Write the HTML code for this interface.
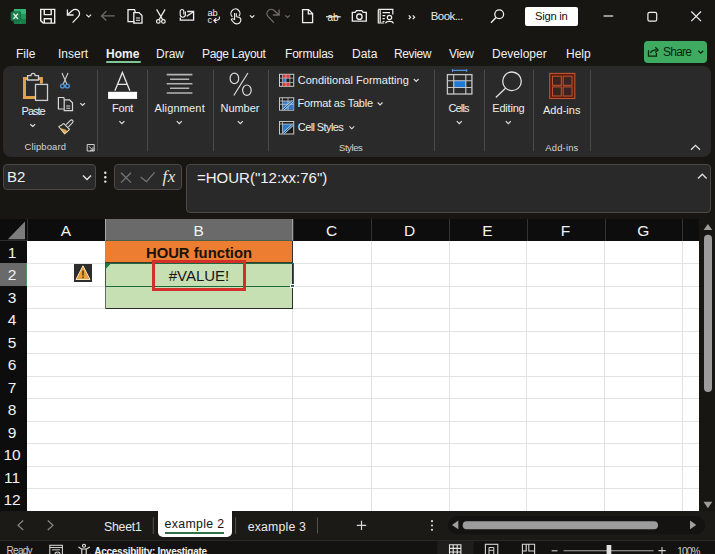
<!DOCTYPE html>
<html><head><meta charset="utf-8">
<style>
*{margin:0;padding:0;box-sizing:border-box}
html,body{width:715px;height:554px;overflow:hidden;background:#181613;font-family:"Liberation Sans",sans-serif;color:#e6e6e6}
.a{position:absolute}
.t{position:absolute;white-space:nowrap;line-height:1}
svg{position:absolute;overflow:visible}
/* menu */
.menu{font-size:12px;color:#f0f0f0;top:48px}
/* ribbon */
#ribbon{left:3px;top:66px;width:708px;height:91px;background:#2a2a2a;border-radius:8px}
.sep{position:absolute;width:1px;background:#4a4a4a;top:70px;height:81px}
.rl{font-size:12px;color:#e6e6e6}
.glab{font-size:11px;color:#dcdcdc}
/* formula */
.box{position:absolute;background:#292929;border:1px solid #4a4948;border-radius:4px}
/* grid */
#grid{left:0;top:219px;width:699px;height:292px;background:#fff;overflow:hidden}
.ch{position:absolute;top:0;height:22px;background:#0d0d0d;color:#f0f0f0;font-size:15px;text-align:center;line-height:22px}
.rh{position:absolute;left:0;width:27px;background:#0d0d0d;color:#f0f0f0;font-size:15px;text-align:center;padding-right:4px}
.gl{position:absolute;background:#e3e3e3}
</style></head><body>

<!-- title bar -->
<svg style="left:0;top:0" width="715" height="35" fill="none" stroke="#f0f0f0" stroke-width="1.2">
<!-- excel logo -->
<rect x="13.8" y="8.9" width="12.2" height="14.8" rx="1.2" fill="#1f9a5c" stroke="none"/>
<rect x="13.8" y="8.9" width="12.2" height="5" rx="1" fill="#33b577" stroke="none"/>
<rect x="13.8" y="18.7" width="12.2" height="5" rx="1" fill="#17804a" stroke="none"/>
<path d="M20.5 8.9 V23.7" stroke="#2a9f63" stroke-width="0.6"/>
<rect x="10.9" y="11.8" width="9.7" height="9" rx="1" fill="#1b8450" stroke="#0f5a33" stroke-width="0.6"/>
<path d="M13.5 13.7 L17.9 18.9 M17.9 13.7 L13.5 18.9" stroke="#f4f4f4" stroke-width="1.3"/>
<!-- save -->
<path d="M40.7 9.4 H54.7 V23.1 H43.2 L40.7 20.6 Z" stroke-width="1.4"/>
<path d="M44.3 9.4 V14.6 H51.2 V9.4" stroke-width="1.4"/>
<path d="M44.3 23.1 V18.8 H51.2 V23.1" stroke-width="1.4"/>
<!-- undo -->
<path d="M67.6 14.8 L72.3 10.6 A4.2 4.2 0 1 1 78.3 16.6 L72.6 22.6" stroke-width="1.3"/>
<path d="M67.4 9.4 V15 H73.6" stroke-width="1.3"/>
<path d="M86.3 14.7 L88.7 17 L91.1 14.7" stroke-width="1.1"/>
<!-- back arrow gray -->
<path d="M101.5 15.9 H114.8 M106.3 11.3 L101.5 15.9 L106.3 20.5" stroke="#6e6c6a" stroke-width="1.3"/>
<!-- copy -->
<path d="M134.5 21.6 H128 V9.6 H134.5 L135.3 12" stroke-width="1.3"/>
<path d="M133.8 12.6 H139 L142 15.6 V23.2 H133.8 Z" stroke-width="1.3"/>
<path d="M136 18 H140 M136 20.3 H140" stroke-width="1.1"/>
<!-- scissors -->
<path d="M156.6 9.4 L162.6 19.6 M165.1 9.4 L159.1 19.6" stroke-width="1.2"/>
<circle cx="158.3" cy="21.4" r="1.8" stroke-width="1.2"/>
<circle cx="163.4" cy="21.4" r="1.8" stroke-width="1.2"/>
<!-- mail attach -->
<path d="M180.3 17.4 V20.2 H193.6 V11.5 H187.2" stroke-width="1.3"/>
<path d="M186.7 16.3 L193.1 11.9" stroke-width="1.2"/>
<path d="M185.4 11.4 V14.6 A2.6 2.6 0 0 1 180.2 14.6 V11.3 A1.8 1.8 0 0 1 183.8 11.3 V14.4" stroke-width="1.1"/>
<!-- proofing -->
<text x="207.6" y="15.7" font-family="Liberation Sans" font-size="9.2" fill="#f0f0f0" stroke="none" letter-spacing="-0.3">ab</text>
<text x="207.6" y="22.9" font-family="Liberation Sans" font-size="9.2" fill="#f0f0f0" stroke="none">c</text>
<path d="M219 16.6 C220.5 18.5 219 20.6 214 20.6 M216.3 18.2 L213.8 20.6 L216.3 23" stroke-width="1.1"/>
<!-- touch -->
<path d="M232.4 16.8 A4.5 4.5 0 1 1 239 16.2" stroke-width="1.2"/>
<path d="M234.6 13 V19.5 L232.5 18.8 C231.3 18.5 230.9 19.5 231.8 20.4 L234.5 23.3 C236.5 24.3 239.5 24 240.5 21.5 C241.2 19.5 240.8 18 239.5 17.5 L236.6 16.8" stroke-width="1.1"/>
<path d="M236.3 13.2 V17" stroke-width="1.1"/>
<path d="M249.9 15.3 L252.1 17.5 L254.3 15.3" stroke-width="1.1"/>
<!-- redo gray -->
<path d="M279.1 9.4 V15 H272.9" stroke="#6e6c6a" stroke-width="1.3"/>
<path d="M278.9 14.8 L274.2 10.6 A4.2 4.2 0 1 0 268.2 16.6 L273.9 22.6" stroke="#6e6c6a" stroke-width="1.3"/>
<path d="M285.3 15.3 L287.5 17.5 L289.7 15.3" stroke="#6e6c6a" stroke-width="1.1"/>
<!-- new doc -->
<path d="M302.6 9.6 H308.6 L312.6 13.6 V22.6 H302.6 Z M308.3 9.8 V13.9 H312.4" stroke-width="1.3"/>
<!-- strike ab -->
<text x="327.5" y="21" font-family="Liberation Sans" font-size="10" fill="#f0f0f0" stroke="none">ab</text>
<path d="M326 16.8 H340.8" stroke-width="1.2"/>
<!-- camera -->
<path d="M352.3 12.3 H355.2 L356.5 10.6 H361.8 L363.2 12.3 H366.3 V21.2 H352.3 Z" stroke-width="1.3"/>
<circle cx="359.4" cy="16.7" r="2.7" stroke-width="1.3"/>
<!-- reader -->
<path d="M378.3 9.4 H392.8 V14.5 M378.3 9.4 V23 H384.2" stroke-width="1.2"/>
<path d="M380.2 9.4 V23" stroke-width="1.6" stroke="#bdbdbd"/>
<path d="M382.5 12.6 H390 M382.5 15.6 H385.3 M382.5 18.6 H384.8 M382.5 21.5 H384.5" stroke-width="1.1"/>
<circle cx="389.5" cy="17.5" r="2.2" stroke-width="1.2"/>
<path d="M385.6 23.4 C386 20.8 393 20.8 393.4 23.4" stroke-width="1.2"/>
<!-- chevrons -->
<path d="M408.8 15.3 L410.6 17.2 L408.8 19.1 M412.8 15.3 L414.6 17.2 L412.8 19.1" stroke-width="1.2"/>
<!-- search -->
<circle cx="499.2" cy="14.2" r="4.4" stroke-width="1.3"/>
<path d="M496 17.5 L491 22.8" stroke-width="1.4"/>
<!-- window controls -->
<path d="M603.6 16 H613.2" stroke-width="1.2"/>
<rect x="647.9" y="12.3" width="8.8" height="8.8" rx="1.6" stroke-width="1.2"/>
<path d="M691.3 11.5 L701 21.2 M701 11.5 L691.3 21.2" stroke-width="1.2"/>
</svg>

<div class="t" style="left:430.7px;top:11.1px;font-size:11.5px;letter-spacing:-0.55px;color:#e8e8e8">Book...</div>
<div class="a" style="left:525px;top:7px;width:52.7px;height:18.8px;background:#fff;border-radius:2px"></div>
<div class="t" style="left:535px;top:11.2px;font-size:11.2px;letter-spacing:-0.25px;color:#111">Sign in</div>

<!-- menu -->
<div class="t menu" style="left:16px">File</div>
<div class="t menu" style="left:58px">Insert</div>
<div class="t menu" style="left:106px;font-weight:bold">Home</div>
<div class="a" style="left:106px;top:60.8px;width:34.6px;height:2.2px;background:#7cc794;border-radius:1px"></div>
<div class="t menu" style="left:156px">Draw</div>
<div class="t menu" style="left:202px;letter-spacing:-0.35px">Page Layout</div>
<div class="t menu" style="left:285px;letter-spacing:-0.2px">Formulas</div>
<div class="t menu" style="left:352px">Data</div>
<div class="t menu" style="left:394px;letter-spacing:-0.4px">Review</div>
<div class="t menu" style="left:449px;letter-spacing:-0.3px">View</div>
<div class="t menu" style="left:492px">Developer</div>
<div class="t menu" style="left:566px">Help</div>
<div class="a" style="left:644px;top:41px;width:63px;height:22px;background:#3fab60;border-radius:4px"></div>
<div class="t" style="left:663.1px;top:46px;font-size:12px;letter-spacing:-0.81px;color:#08260f">Share</div>
<svg style="left:0;top:0" width="715" height="70" fill="none" stroke="#08260f" stroke-width="1.3">
<path d="M648.5 50.3 V56.2 H656.4 V53"/>
<path d="M650.6 53.2 C651.2 51 653 49.9 656.5 49.9"/>
<path d="M655.3 47.3 L658 49.9 L655.3 52.5"/>
<path d="M698.3 50.8 L700.8 53.2 L703.3 50.8" stroke-width="1.2"/>
</svg>

<!-- ribbon -->
<div id="ribbon" class="a"></div>
<div class="sep" style="left:97px"></div>
<div class="sep" style="left:147px"></div>
<div class="sep" style="left:213px"></div>
<div class="sep" style="left:268px"></div>
<div class="sep" style="left:434px"></div>
<div class="sep" style="left:484px"></div>
<div class="sep" style="left:533px"></div>
<div class="sep" style="left:590px"></div>

<svg style="left:0;top:0" width="715" height="160" fill="none" stroke="#d8d8d8" stroke-width="1.2">
<!-- paste -->
<path d="M27.5 78.5 H24.5 V97.6 H35" stroke="#e0a24a" stroke-width="3"/>
<path d="M38.5 78.5 H41.4 V83.5" stroke="#e0a24a" stroke-width="3"/>
<path d="M27.6 80 V75.6 H31 C31 72.6 35.2 72.6 35.2 75.6 H38.5 V80 Z" stroke="#cfcfcf" stroke-width="1.3" fill="#2a2a2a"/>
<rect x="35.5" y="84.4" width="12" height="16" stroke="#cfcfcf" stroke-width="1.3" fill="#2a2a2a"/>
<path d="M30.3 124.2 L32.7 126.5 L35.1 124.2" stroke-width="1.2" stroke="#e0e0e0"/>
<!-- scissors -->
<path d="M62 73 L67 84.5 M68 73 L63 84.5" stroke="#d0d0d0" stroke-width="1.1"/>
<circle cx="62.5" cy="86" r="1.9" stroke="#4d95db" stroke-width="1.4"/>
<circle cx="67.4" cy="86" r="1.9" stroke="#4d95db" stroke-width="1.4"/>
<!-- copy -->
<path d="M63.6 109 H58.4 V97.5 H63.8 L64.3 99.5" stroke-width="1.2"/>
<path d="M64.2 99.8 H69.5 L72.5 102.8 V110.6 H64.2 Z" stroke-width="1.2"/>
<path d="M66.2 106 H70.2 M66.2 108.3 H70.2" stroke-width="1.1"/>
<path d="M80.3 103.2 L82.6 105.5 L84.9 103.2" stroke-width="1.2" stroke="#e0e0e0"/>
<!-- brush -->
<path d="M66.2 124.6 L70.4 120.4 C71 119.8 72 119.8 72.6 120.4 C73.2 121 73.2 122 72.6 122.6 L68.4 126.8" stroke="#dcdcdc" stroke-width="1.1"/>
<path d="M63.6 123.3 L69.6 129.3" stroke="#dcdcdc" stroke-width="1.2"/>
<path d="M60 128 L65.6 129.6 L67.2 131.2 L64.7 133.7 Z" fill="#e2a447" stroke="none"/>
<path d="M58.6 126.5 C60.5 126 62 125 63.6 123.3 M69.6 129.3 C67.8 131 66.8 132.2 64.6 133.8 L58.6 126.5" stroke="#e8dcc0" stroke-width="1.1"/>
<!-- font -->
<path d="M114.9 90.8 L122.4 72.4 L129.9 90.8 M118 84.3 H126.8" stroke="#e8e8e8" stroke-width="1.3"/>
<rect x="108.1" y="91.8" width="29" height="7.1" fill="#ffffff" stroke="none"/>
<path d="M119.4 121.2 L121.9 123.7 L124.4 121.2" stroke-width="1.2" stroke="#e0e0e0"/>
<!-- alignment -->
<path d="M166.7 74.6 H192.4 M170 79.3 H189.2 M166.7 83.8 H192.4 M170 88.3 H189.2 M166.7 93 H192.4" stroke="#b4b4b4" stroke-width="1.6"/>
<path d="M176.8 121.2 L179.3 123.7 L181.8 121.2" stroke-width="1.2" stroke="#e0e0e0"/>
<!-- number -->
<path d="M247.9 73 L233.8 95.5" stroke="#dcdcdc" stroke-width="1.2"/>
<ellipse cx="234.4" cy="78.4" rx="4.3" ry="5.2" stroke="#dcdcdc" stroke-width="1.2"/>
<ellipse cx="246.9" cy="90.2" rx="4.3" ry="5.2" stroke="#dcdcdc" stroke-width="1.2"/>
<path d="M237.8 121.2 L240.3 123.7 L242.8 121.2" stroke-width="1.2" stroke="#e0e0e0"/>
<!-- conditional formatting -->
<rect x="279.5" y="74.3" width="14.2" height="12" fill="#1a1a1a" stroke="#d0d0d0" stroke-width="1"/>
<rect x="282.5" y="74.8" width="7.3" height="3.4" fill="#e03a3a" stroke="none"/>
<rect x="282.5" y="82.6" width="7.3" height="3.5" fill="#e03a3a" stroke="none"/>
<rect x="282.5" y="78.3" width="3.5" height="4.2" fill="#3d6fc7" stroke="none"/>
<path d="M282.4 74.3 V86.3 M286 74.3 V86.3 M289.9 74.3 V86.3 M279.5 78.2 H293.7 M279.5 82.5 H293.7" stroke="#bdbdbd" stroke-width="0.8"/>
<path d="M413.8 79 L416.2 81.4 L418.6 79" stroke-width="1.1" stroke="#e0e0e0"/>
<!-- format as table -->
<rect x="279.5" y="97.8" width="14.2" height="12.4" fill="#1a1a1a" stroke="#c8c8c8" stroke-width="1"/>
<path d="M282.6 101 H293.5 V109.8 H282.6 Z" fill="#2f78c4" stroke="none"/>
<path d="M282.4 97.8 V110.2 M288 97.8 V110.2 M279.5 101 H293.7 M279.5 104.3 H293.7" stroke="#c8c8c8" stroke-width="0.8"/>
<path d="M283.6 109.3 L293 100.8" stroke="#9fd0f5" stroke-width="2.4"/>
<path d="M283.6 109.3 L293 100.8" stroke="#1d3550" stroke-width="0.9"/>
<path d="M377.7 102.5 L380.1 104.9 L382.5 102.5" stroke-width="1.1" stroke="#e0e0e0"/>
<!-- cell styles -->
<rect x="279.5" y="121.5" width="14.2" height="12.5" fill="#1a1a1a" stroke="#c8c8c8" stroke-width="1"/>
<path d="M282.4 124 H292.5 L282.4 133.5 Z" fill="#2f78c4" stroke="none"/>
<path d="M282.4 121.5 V134 M279.5 124 H293.7" stroke="#c8c8c8" stroke-width="0.8"/>
<path d="M283.6 133.2 L293 124.6" stroke="#9fd0f5" stroke-width="2.4"/>
<path d="M283.6 133.2 L293 124.6" stroke="#1d3550" stroke-width="0.9"/>
<path d="M349.4 126.4 L351.8 128.8 L354.2 126.4" stroke-width="1.1" stroke="#e0e0e0"/>
<!-- launcher -->
<path d="M87.2 151 V144.5 H94.2 V151 Z" stroke="#cfcfcf" stroke-width="1"/>
<path d="M89 146.3 L93 150.3 M93 147.3 V150.3 H90" stroke="#cfcfcf" stroke-width="1"/>
<!-- cells -->
<path d="M452.5 70.4 H466.7 M452.5 68.9 V71.9 M466.7 68.9 V71.9" stroke="#4d95db" stroke-width="1.1"/>
<rect x="453.7" y="80.7" width="12.1" height="6.8" fill="#1e7ad6" stroke="none"/>
<rect x="447.4" y="74.6" width="24.5" height="19.4" stroke="#c8c8c8" stroke-width="1.3"/>
<path d="M453.7 74.6 V94 M465.8 74.6 V94 M447.4 80.7 H471.9 M447.4 87.5 H471.9" stroke="#c8c8c8" stroke-width="1.1"/>
<path d="M456.8 121.2 L459.3 123.7 L461.8 121.2" stroke-width="1.2" stroke="#e0e0e0"/>
<!-- editing -->
<circle cx="512" cy="81.3" r="9.3" stroke="#e0e0e0" stroke-width="1.3"/>
<path d="M505.5 88.3 L495.8 97.5" stroke="#e0e0e0" stroke-width="1.3"/>
<path d="M505.8 121.2 L508.3 123.7 L510.8 121.2" stroke-width="1.2" stroke="#e0e0e0"/>
<!-- add-ins -->
<rect x="549.7" y="73.4" width="25.1" height="25.1" fill="#5e1a0a" stroke="#bf5530" stroke-width="1.1"/>
<rect x="552.5" y="76.2" width="8.8" height="9.1" fill="#3a2420" stroke="#bf5530" stroke-width="1"/>
<rect x="563.2" y="76.2" width="8.8" height="9.1" fill="#3a2420" stroke="#bf5530" stroke-width="1"/>
<rect x="552.5" y="86.9" width="8.8" height="9.1" fill="#3a2420" stroke="#bf5530" stroke-width="1"/>
<rect x="563.2" y="86.9" width="8.8" height="9.1" fill="#3a2420" stroke="#bf5530" stroke-width="1"/>
<!-- collapse -->
<path d="M691 149.8 L695.5 145.3 L700 149.8" stroke-width="1.3" stroke="#e0e0e0"/>
</svg>
<div class="t" style="left:21.6px;top:105.9px;font-size:11px;letter-spacing:-1.03px;color:#eeeeee">Paste</div>
<div class="t" style="left:24.5px;top:142.3px;font-size:9.4px;letter-spacing:0.17px;color:#d6d6d6">Clipboard</div>
<div class="t" style="left:112.1px;top:103.1px;font-size:11px;letter-spacing:-0.25px;color:#eeeeee">Font</div>
<div class="t" style="left:154.5px;top:103.1px;font-size:11px;letter-spacing:0.16px;color:#eeeeee">Alignment</div>
<div class="t" style="left:220.5px;top:103.1px;font-size:11px;letter-spacing:-0.05px;color:#eeeeee">Number</div>
<div class="t" style="left:297.7px;top:74.7px;font-size:11px;letter-spacing:0.02px;color:#eeeeee">Conditional Formatting</div>
<div class="t" style="left:297.5px;top:98.1px;font-size:11px;letter-spacing:-0.22px;color:#eeeeee">Format as Table</div>
<div class="t" style="left:297.8px;top:121.9px;font-size:11px;letter-spacing:-0.59px;color:#eeeeee">Cell Styles</div>
<div class="t" style="left:339px;top:142.7px;font-size:9.4px;letter-spacing:-0.37px;color:#d6d6d6">Styles</div>
<div class="t" style="left:448.5px;top:103.1px;font-size:11px;letter-spacing:-0.86px;color:#eeeeee">Cells</div>
<div class="t" style="left:492.3px;top:103.1px;font-size:11px;letter-spacing:-0.2px;color:#eeeeee">Editing</div>
<div class="t" style="left:543px;top:104.8px;font-size:11px;letter-spacing:0.03px;color:#eeeeee">Add-ins</div>
<div class="t" style="left:545.3px;top:142.7px;font-size:9.4px;letter-spacing:0.2px;color:#d6d6d6">Add-ins</div>

<!-- formula bar -->
<div class="box" style="left:3px;top:164px;width:93px;height:26px"></div>
<div class="t" style="left:7px;top:169px;font-size:15px;color:#f2f2f2">B2</div>
<div class="box" style="left:114px;top:164px;width:68px;height:26px"></div>
<div class="box" style="left:186px;top:164px;width:525px;height:49px"></div>
<div class="t" style="left:197px;top:170px;font-size:15px;color:#f2f2f2">=HOUR("12:xx:76")</div>
<svg style="left:0;top:150px" width="715" height="70" fill="none" stroke="#dcdcdc" stroke-width="1.3">
<path d="M83 175.6 L87 179.6 L91 175.6" transform="translate(0,-150)" stroke="#e6e6e6" stroke-width="1.4"/>
<circle cx="105.3" cy="22.8" r="1.2" fill="#e6e6e6" stroke="none"/>
<circle cx="105.3" cy="27.2" r="1.2" fill="#e6e6e6" stroke="none"/>
<circle cx="105.3" cy="31.6" r="1.2" fill="#e6e6e6" stroke="none"/>
<path d="M121 22.8 L131 32.6 M131 22.8 L121 32.6" stroke="#7a7876" stroke-width="1.2"/>
<path d="M140.7 27 L146.4 31.6 L154.6 22.3" stroke="#7a7876" stroke-width="1.2"/>
<path d="M698 28.5 L702.3 24.2 L706.6 28.5" stroke="#e0e0e0" stroke-width="1.3"/>
</svg>
<div class="t" style="left:162.5px;top:167.5px;font-family:'Liberation Serif',serif;font-style:italic;font-size:17px;color:#e6e6e6;letter-spacing:0.6px">fx</div>


<!-- grid -->
<div id="grid" class="a">
<div class="a" style="left:0;top:0;width:699px;height:22px;background:#0d0d0d"></div>
<svg style="left:0;top:0" width="27" height="22"><polygon points="25,2.6 25,20.2 7.8,20.2" fill="#7c7c7c"/></svg>
<div class="a" style="left:0;top:21px;width:27px;height:1px;background:#2c2c2c"></div>
<div class="a" style="left:27px;top:0;width:1px;height:22px;background:#333"></div>
<div class="t" style="left:27px;width:78px;top:3.5px;font-size:15.5px;text-align:center;color:#f2f2f2">A</div>
<div class="a" style="left:105px;top:0;width:187.5px;height:22px;background:#6a6a6a;border-left:1px solid #a8a8a8;border-right:1px solid #a0a0a0;border-bottom:1px solid #4a5e4c"></div>
<div class="t" style="left:105px;width:187.5px;top:3.5px;font-size:15.5px;text-align:center;color:#f2f2f2">B</div>
<div class="a" style="left:292.5px;top:0;width:1px;height:22px;background:#333"></div>
<div class="t" style="left:292.5px;width:78.30000000000001px;top:3.5px;font-size:15.5px;text-align:center;color:#f2f2f2">C</div>
<div class="a" style="left:370.8px;top:0;width:1px;height:22px;background:#333"></div>
<div class="t" style="left:370.8px;width:77.80000000000001px;top:3.5px;font-size:15.5px;text-align:center;color:#f2f2f2">D</div>
<div class="a" style="left:448.6px;top:0;width:1px;height:22px;background:#333"></div>
<div class="t" style="left:448.6px;width:77.89999999999998px;top:3.5px;font-size:15.5px;text-align:center;color:#f2f2f2">E</div>
<div class="a" style="left:526.5px;top:0;width:1px;height:22px;background:#333"></div>
<div class="t" style="left:526.5px;width:78.0px;top:3.5px;font-size:15.5px;text-align:center;color:#f2f2f2">F</div>
<div class="a" style="left:604.5px;top:0;width:1px;height:22px;background:#333"></div>
<div class="t" style="left:604.5px;width:77.79999999999995px;top:3.5px;font-size:15.5px;text-align:center;color:#f2f2f2">G</div>
<div class="a" style="left:682.3px;top:0;width:1px;height:22px;background:#333"></div>
<div class="a" style="left:0;top:22px;width:27px;height:22px;background:#0d0d0d"></div>
<div class="t" style="left:0;width:24px;top:26px;font-size:15.5px;text-align:center;color:#f2f2f2">1</div>
<div class="a" style="left:0;top:44px;width:27px;height:23px;background:#6a6a6a"></div>
<div class="t" style="left:0;width:24px;top:48px;font-size:15.5px;text-align:center;color:#f2f2f2">2</div>
<div class="a" style="left:0;top:67px;width:27px;height:22px;background:#0d0d0d"></div>
<div class="t" style="left:0;width:24px;top:71px;font-size:15.5px;text-align:center;color:#f2f2f2">3</div>
<div class="a" style="left:0;top:89px;width:27px;height:23px;background:#0d0d0d"></div>
<div class="t" style="left:0;width:24px;top:93px;font-size:15.5px;text-align:center;color:#f2f2f2">4</div>
<div class="a" style="left:0;top:112px;width:27px;height:22px;background:#0d0d0d"></div>
<div class="t" style="left:0;width:24px;top:116px;font-size:15.5px;text-align:center;color:#f2f2f2">5</div>
<div class="a" style="left:0;top:134px;width:27px;height:23px;background:#0d0d0d"></div>
<div class="t" style="left:0;width:24px;top:138px;font-size:15.5px;text-align:center;color:#f2f2f2">6</div>
<div class="a" style="left:0;top:157px;width:27px;height:22px;background:#0d0d0d"></div>
<div class="t" style="left:0;width:24px;top:161px;font-size:15.5px;text-align:center;color:#f2f2f2">7</div>
<div class="a" style="left:0;top:179px;width:27px;height:23px;background:#0d0d0d"></div>
<div class="t" style="left:0;width:24px;top:183px;font-size:15.5px;text-align:center;color:#f2f2f2">8</div>
<div class="a" style="left:0;top:202px;width:27px;height:22px;background:#0d0d0d"></div>
<div class="t" style="left:0;width:24px;top:206px;font-size:15.5px;text-align:center;color:#f2f2f2">9</div>
<div class="a" style="left:0;top:224px;width:27px;height:23px;background:#0d0d0d"></div>
<div class="t" style="left:0;width:24px;top:228px;font-size:15.5px;text-align:center;color:#f2f2f2">10</div>
<div class="a" style="left:0;top:247px;width:27px;height:22px;background:#0d0d0d"></div>
<div class="t" style="left:0;width:24px;top:251px;font-size:15.5px;text-align:center;color:#f2f2f2">11</div>
<div class="a" style="left:0;top:269px;width:27px;height:23px;background:#0d0d0d"></div>
<div class="t" style="left:0;width:24px;top:273px;font-size:15.5px;text-align:center;color:#f2f2f2">12</div>
<div class="a" style="left:26px;top:44px;width:1px;height:23px;background:#3f9a5f"></div>
<div class="gl" style="left:27px;top:44px;width:672px;height:1px"></div>
<div class="gl" style="left:27px;top:67px;width:672px;height:1px"></div>
<div class="gl" style="left:27px;top:89px;width:672px;height:1px"></div>
<div class="gl" style="left:27px;top:112px;width:672px;height:1px"></div>
<div class="gl" style="left:27px;top:134px;width:672px;height:1px"></div>
<div class="gl" style="left:27px;top:157px;width:672px;height:1px"></div>
<div class="gl" style="left:27px;top:179px;width:672px;height:1px"></div>
<div class="gl" style="left:27px;top:202px;width:672px;height:1px"></div>
<div class="gl" style="left:27px;top:224px;width:672px;height:1px"></div>
<div class="gl" style="left:27px;top:247px;width:672px;height:1px"></div>
<div class="gl" style="left:27px;top:269px;width:672px;height:1px"></div>
<div class="gl" style="left:292px;top:22px;width:1px;height:270px"></div>
<div class="gl" style="left:371px;top:22px;width:1px;height:270px"></div>
<div class="gl" style="left:449px;top:22px;width:1px;height:270px"></div>
<div class="gl" style="left:526px;top:22px;width:1px;height:270px"></div>
<div class="gl" style="left:604px;top:22px;width:1px;height:270px"></div>
<div class="gl" style="left:682px;top:22px;width:1px;height:270px"></div>

</div>


<!-- cells -->
<div class="a" style="left:105px;top:241px;width:188px;height:22px;background:#ed7d31;border-right:1px solid #333;border-bottom:1px solid #3a3a2a"></div>
<div class="a" style="left:105px;top:263px;width:188px;height:46px;background:#c6e0b4;border-right:1px solid #2b2b2b;border-bottom:1px solid #2b2b2b"></div>
<div class="a" style="left:104.5px;top:262.5px;width:189px;height:24px;border:1.5px solid #22683f"></div>
<div class="a" style="left:290px;top:284px;width:5px;height:4px;background:#2a7248;border:1px solid #fff"></div>
<svg style="left:105.5px;top:264px" width="6" height="6"><polygon points="0,0 4.5,0 0,4.5" fill="#1e7a3c"/></svg>
<div class="a" style="left:104.5px;top:287px;width:1px;height:22px;background:#6a6a6a"></div>
<div class="t" style="left:105px;width:188px;top:246px;font-size:14.8px;font-weight:bold;color:#1a1208;text-align:center">HOUR function</div>
<div class="t" style="left:105px;width:188px;top:268px;font-size:15px;color:#161616;text-align:center">#VALUE!</div>
<div class="a" style="left:151.7px;top:260px;width:94.3px;height:31.3px;border:3px solid #d3302c"></div>
<div class="a" style="left:74px;top:264px;width:18px;height:18px;background:#2d2d2d"></div>
<svg style="left:74px;top:264px" width="18" height="18"><polygon points="9,1.8 16,15.5 2,15.5" fill="#e9a23b" stroke="#f6e3bf" stroke-width="1"/><rect x="8.2" y="6.5" width="1.6" height="5" fill="#5a3a10"/><rect x="8.2" y="12.5" width="1.6" height="1.6" fill="#5a3a10"/></svg>

<!-- tab bar -->
<div class="a" style="left:0;top:511px;width:157.6px;height:29px;background:#1b1a17;border-top-right-radius:5px"></div>
<div class="a" style="left:232.2px;top:511px;width:483px;height:29px;background:#1b1a17;border-top-left-radius:5px"></div>
<div class="a" style="left:157.6px;top:530px;width:75px;height:10px;background:#1b1a17"></div>
<div class="a" style="left:157.6px;top:508px;width:74.6px;height:28.6px;background:#fff;border-radius:0 0 5px 5px"></div>
<div class="a" style="left:0;top:540px;width:715px;height:14px;background:#131211;border-top:1px solid #2a2927"></div>
<svg style="left:0;top:505px" width="715" height="49" fill="none" stroke="#8a8886" stroke-width="1.2">
<path d="M23.2 15.5 L18 20.3 L23.2 25" />
<path d="M47.8 15.5 L53 20.3 L47.8 25" />
<path d="M153.3 12.3 V29" stroke="#55534f" stroke-width="1"/>
<path d="M235.6 12.3 V29" stroke="#55534f" stroke-width="1"/>
<path d="M317.5 12.3 V28.5" stroke="#55534f" stroke-width="1"/>
<path d="M361.5 15.7 V25 M356.8 20.3 H366.2" stroke="#d8d8d8" stroke-width="1.2"/>
<circle cx="432" cy="16.2" r="1.1" fill="#d8d8d8" stroke="none"/>
<circle cx="432" cy="20.5" r="1.1" fill="#d8d8d8" stroke="none"/>
<circle cx="432" cy="24.8" r="1.1" fill="#d8d8d8" stroke="none"/>
<rect x="448" y="11.2" width="257" height="18" rx="9" fill="#141311" stroke="none"/>
<path d="M458.3 15.5 V24.3 L452 19.9 Z" fill="#a0a0a0" stroke="none"/>
<rect x="462.7" y="16.2" width="195.3" height="8" rx="4" fill="#9c9c9c" stroke="none"/>
<path d="M690 15.5 V24.3 L696.3 19.9 Z" fill="#a0a0a0" stroke="none"/>
<!-- status icons -->
<rect x="49.8" y="40.3" width="12.6" height="12" stroke="#cfcfcf" stroke-width="1.1"/>
<path d="M49.8 42.5 H62.4 M52 44.8 H60" stroke="#cfcfcf" stroke-width="1"/>
<circle cx="57.5" cy="49.6" r="2.6" fill="#131211" stroke="#cfcfcf" stroke-width="1.1"/>
<circle cx="57.5" cy="49.6" r="1.2" fill="#cfcfcf" stroke="none"/>
<circle cx="84" cy="40.8" r="1.5" stroke="#e6e6e6" stroke-width="1.1"/>
<path d="M78.4 42 L81.5 44 H86.5 L89.8 42 M81.8 44 V49 L80 53 M86.2 44 V49 M84 49 L86.5 53.5 L91 49" stroke="#e6e6e6" stroke-width="1.1"/>
<rect x="437.3" y="36" width="36.3" height="14" fill="#1f1e1c" stroke="none"/>
<path d="M449.5 39.2 V50 M453.2 39.2 V50 M457.2 39.2 V50 M460.9 39.2 V50 M449.5 39.7 H460.9 M449.5 43.4 H460.9 M449.5 47 H460.9" stroke="#e6e6e6" stroke-width="1.1"/>
<rect x="485.4" y="39.3" width="12.4" height="15" stroke="#d6d6d6" stroke-width="1.1"/>
<path d="M489 42.5 H493.8 M489 45.3 H493.8 M489 42.5 V54 M493.8 42.5 V54" stroke="#d6d6d6" stroke-width="1"/>
<path d="M522.4 54 V39.3 H534.6 V54 M526.2 39.3 V46 H522.4 M528.8 39.3 V46 H534.6" stroke="#d6d6d6" stroke-width="1.1"/>
<path d="M551.6 45.8 H557.5" stroke="#cfcfcf" stroke-width="1.1"/>
<path d="M563.5 45.8 H653.6" stroke="#a8a8a8" stroke-width="1.1"/>
<rect x="606.6" y="40" width="4.7" height="14" fill="#e0e0e0" stroke="none"/>
<path d="M658.4 45.6 H665.7 M662 42 V49.2" stroke="#cfcfcf" stroke-width="1.1"/>
</svg>
<div class="t" style="left:103.9px;top:520.9px;font-size:12.3px;letter-spacing:-0.2px;color:#eaeaea">Sheet1</div>
<div class="t" style="left:164.5px;top:517.5px;font-size:12.3px;letter-spacing:0.35px;color:#141414">example 2</div>
<div class="a" style="left:165px;top:532.2px;width:59.2px;height:2px;background:#2f6f4a"></div>
<div class="t" style="left:247.7px;top:520.6px;font-size:12.3px;letter-spacing:0.18px;color:#eaeaea">example 3</div>
<div class="t" style="left:6.5px;top:545.6px;font-size:10px;letter-spacing:-0.7px;color:#cfcfcf">Ready</div>
<div class="t" style="left:94.3px;top:546.6px;font-size:10px;letter-spacing:-0.27px;color:#f2f2f2;font-weight:bold">Accessibility: Investigate</div>
<div class="t" style="left:677.3px;top:546.5px;font-size:10px;letter-spacing:-0.86px;color:#cfcfcf">100%</div>
<!-- vertical scrollbar -->
<svg style="left:699px;top:219px" width="16" height="292">
<path d="M4.6 11 L8.9 4.9 L13.3 11 Z" fill="#9c9c9c"/>
<rect x="5" y="15.7" width="8" height="157.3" rx="4" fill="#9c9c9c"/>
<path d="M4.5 282.7 L8.9 289.3 L13.3 282.7 Z" fill="#9c9c9c"/>
</svg>
</body></html>
